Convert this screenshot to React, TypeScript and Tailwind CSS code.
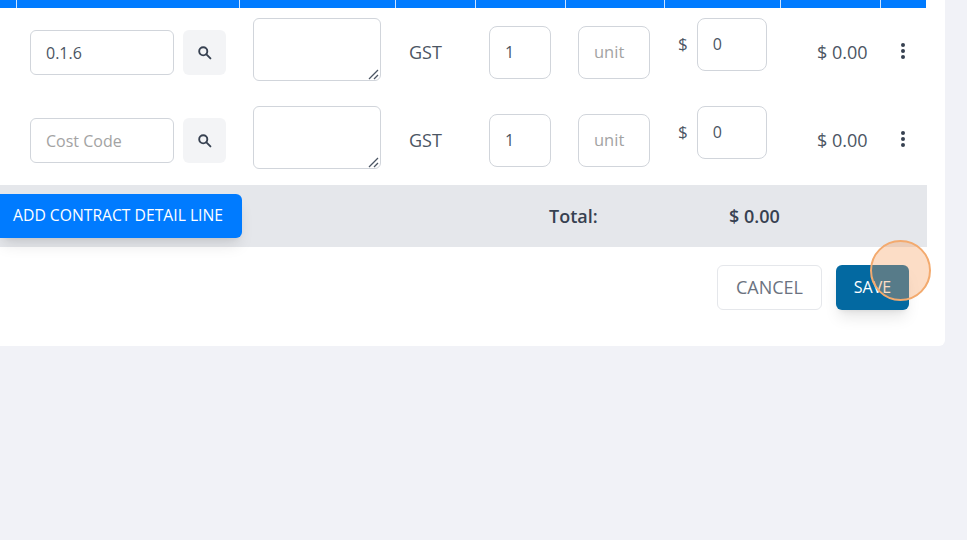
const font = { fontFamily: '"Open Sans", sans-serif' };

function SearchIcon() {
  return (
    <svg width="15" height="15" viewBox="0 0 24 24" fill="none" stroke="#374151" strokeWidth="3">
      <circle cx="10" cy="10" r="6.5" />
      <path d="M15 15l6.5 6.5" strokeLinecap="round" />
    </svg>
  );
}

function Dots() {
  return (
    <div className="flex flex-col gap-[2px] items-center w-fit">
      <span className="w-[4px] h-[4px] rounded-full bg-[#374151]" />
      <span className="w-[4px] h-[4px] rounded-full bg-[#374151]" />
      <span className="w-[4px] h-[4px] rounded-full bg-[#374151]" />
    </div>
  );
}

function Row({ code }: { code: string }) {
  return (
    <div className="grid grid-cols-[16px_223px_156px_80px_90px_99px_116px_100px_46px] h-[88px] text-[#4b5563] text-[18px]">
      <div />
      <div className="flex items-start pt-[22px] pl-[14px] gap-[9px]">
        <input
          readOnly
          defaultValue={code}
          placeholder="Cost Code"
          className="w-[144px] h-[45px] rounded-[6px] border border-[#d1d5db] px-[15px] text-[16px] text-[#4b5563] placeholder:text-[#a3a3a3] outline-none"
        />
        <button className="w-[43px] h-[45px] rounded-[6px] bg-[#f3f4f6] flex items-center justify-center">
          <SearchIcon />
        </button>
      </div>
      <div className="pt-[10px] pl-[14px]">
        <div className="relative w-[128px] h-[63px]">
          <textarea
            readOnly
            className="block w-full h-full rounded-[6px] border border-[#d1d5db] outline-none resize-none"
          />
          <svg className="absolute right-[1px] bottom-[1px]" width="12" height="12" viewBox="0 0 12 12" stroke="#4b5563" strokeWidth="1.3" fill="none">
            <path d="M1 11L10 2M6 11L10 7" />
          </svg>
        </div>
      </div>
      <div className="pt-[32px] pl-[14px] leading-[24px]">GST</div>
      <div className="pt-[18px] pl-[14px]">
        <div className="w-[62px] h-[53px] rounded-[8px] border border-[#d1d5db] flex items-center pl-[15px] pb-[2px] text-[16px]">1</div>
      </div>
      <div className="pt-[18px] pl-[13px]">
        <div className="w-[72px] h-[53px] rounded-[8px] border border-[#d1d5db] flex items-center pl-[15px] pb-[1px] text-[16.5px] text-[#a3a3a3]">unit</div>
      </div>
      <div className="pt-[10px] pl-[14px] flex items-start gap-[9px]">
        <span className="mt-[14px] leading-[24px] text-[17px]">$</span>
        <div className="w-[70px] h-[53px] rounded-[8px] border border-[#d1d5db] flex items-center pl-[15px] pb-[2px] text-[16px]">0</div>
      </div>
      <div className="pt-[32px] pl-[37px] leading-[24px]">$ 0.00</div>
      <div className="pt-[35px] pl-[21px]"><Dots /></div>
    </div>
  );
}

export default function App() {
  return (
    <div className="h-[540px] bg-[#f1f2f7] overflow-hidden" style={font}>
      <div className="w-[945px] h-[346px] bg-white rounded-br-[6px] flex flex-col">
        <div className="w-[926px] h-[8px] bg-[#007bff] grid grid-cols-[16px_223px_156px_80px_90px_99px_116px_100px_46px]">
          {[0, 1, 2, 3, 4, 5, 6, 7, 8].map((i) => (
            <div key={i} className={i > 0 ? "border-l border-[#cfe4ff]" : ""} />
          ))}
        </div>
        <div className="w-[926px]">
          <Row code="0.1.6" />
          <Row code="" />
        </div>
        <div className="w-[927px] h-[62px] mt-px bg-[#e5e7eb] flex items-start">
          <button className="w-[242px] h-[44px] mt-[9px] rounded-r-[6px] bg-[#007bff] text-white text-[15.7px] text-right pr-[19px] shadow-lg">
            ADD CONTRACT DETAIL LINE
          </button>
          <span className="ml-[307px] mt-[18px] w-[180px] font-semibold text-[18px] leading-[26px] text-[#374151]">Total:</span>
          <span className="mt-[18px] font-semibold text-[18px] leading-[26px] text-[#374151]">$ 0.00</span>
        </div>
        <div className="flex justify-end gap-[14px] w-[909px] mt-[18px]">
          <button className="w-[105px] h-[45px] rounded-[6px] border border-[#e5e7eb] bg-white text-[18px] text-[#6b7280]">CANCEL</button>
          <button className="w-[73px] h-[45px] pb-[2px] rounded-[6px] bg-[#0369a1] text-white text-[16px] shadow-lg">SAVE</button>
        </div>
      </div>
      <div className="fixed left-[870px] top-[240px] w-[61px] h-[61px] rounded-full bg-[#f59e5b]/35 border-2 border-[#f3aa6e]" />
    </div>
  );
}
